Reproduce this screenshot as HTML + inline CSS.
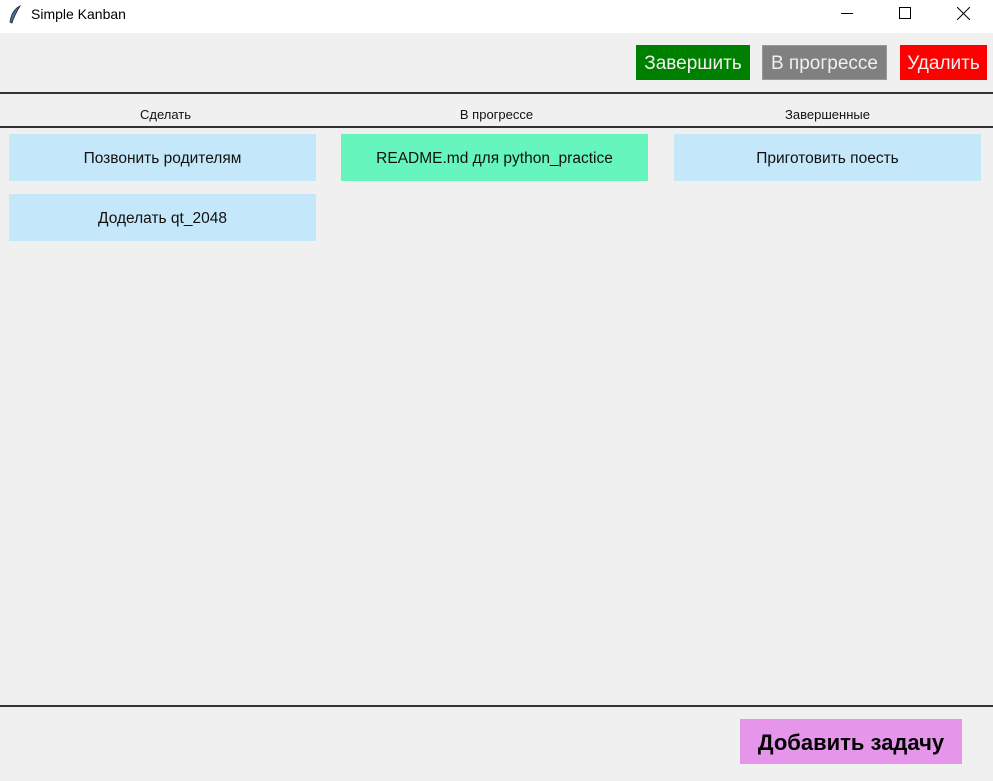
<!DOCTYPE html>
<html><head><meta charset="utf-8"><style>
body{margin:0;width:993px;height:781px;background:#f0f0f0;font-family:"Liberation Sans",sans-serif;position:relative;overflow:hidden}
.a{position:absolute;box-sizing:border-box}
.tb{left:0;top:0;width:993px;height:33px;background:#fff}
.btn{color:#f0f0f0;font-size:19px;display:flex;align-items:center;justify-content:center;padding-top:3px}
.card{background:#c4e8fa;font-size:15.5px;color:#111;display:flex;align-items:center;justify-content:center;width:307px;height:47px;padding-top:3px}
.hd{font-size:13px;color:#111;text-align:center;width:331px;top:107px}
.ln{left:0;width:993px;height:2px;background:#333}
</style></head><body>
<div class="a tb"></div>
<svg class="a" style="left:8px;top:5px" width="14" height="20" viewBox="0 0 14 20"><path d="M12 1C6 4 3 10 2 17L4 18C6 11 9 6 12 1Z" fill="#4a6fa8" stroke="#223" stroke-width=".8"/></svg>
<div class="a" style="left:31px;top:6px;font-size:14px;color:#000">Simple Kanban</div>
<div class="a" style="left:841px;top:13px;width:12px;height:1px;background:#000"></div>
<div class="a" style="left:899px;top:7px;width:12px;height:12px;border:1px solid #000"></div>
<svg class="a" style="left:957px;top:7px" width="13" height="13"><path d="M0 0L13 13M13 0L0 13" stroke="#000" stroke-width="1"/></svg>
<div class="a btn" style="left:636px;top:45px;width:114px;height:35px;background:#008000">Завершить</div>
<div class="a btn" style="left:762px;top:45px;width:125px;height:35px;background:#808080;border:1px solid #999">В прогрессе</div>
<div class="a btn" style="left:900px;top:45px;width:87px;height:35px;background:#ff0000">Удалить</div>
<div class="a ln" style="top:92px"></div>
<div class="a hd" style="left:0">Сделать</div>
<div class="a hd" style="left:331px">В прогрессе</div>
<div class="a hd" style="left:662px">Завершенные</div>
<div class="a ln" style="top:126px"></div>
<div class="a card" style="left:9px;top:134px">Позвонить родителям</div>
<div class="a card" style="left:9px;top:194px">Доделать qt_2048</div>
<div class="a card" style="left:341px;top:134px;background:#66f5bc">README.md для python_practice</div>
<div class="a card" style="left:674px;top:134px">Приготовить поесть</div>
<div class="a ln" style="top:705px"></div>
<div class="a" style="left:740px;top:719px;width:222px;height:45px;background:#e596ea;font-size:22px;font-weight:bold;color:#000;display:flex;align-items:center;justify-content:center;padding-top:3px">Добавить задачу</div>
</body></html>
